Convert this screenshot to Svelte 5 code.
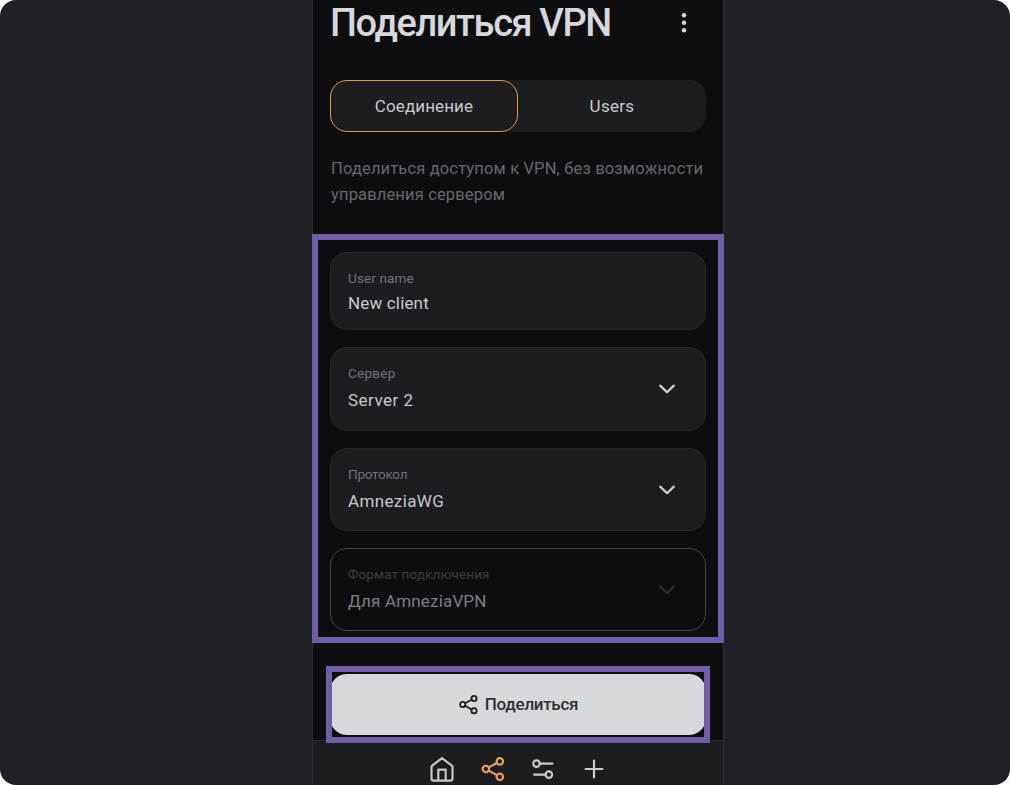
<script>
  const fields = [
    { label: 'User name', value: 'New client', kind: 'input', ls: 0.13, vs: 0.16 },
    { label: 'Сервер', value: 'Server 2', kind: 'select', ls: 0.25, vs: 0.48 },
    { label: 'Протокол', value: 'AmneziaWG', kind: 'select', ls: -0.25, vs: 0.36 },
    { label: 'Формат подключения', value: 'Для AmneziaVPN', kind: 'disabled', ls: 0.11, vs: 0.17 },
  ];
</script>

{#snippet share()}
  <circle cx="18.3" cy="5" r="3" />
  <circle cx="5.4" cy="12" r="3" />
  <circle cx="18.3" cy="19.2" r="3" />
  <path d="M8 13.5 15.6 17.7M15.6 6.5 8 10.5" />
{/snippet}

<div class="canvas">
  <main class="panel">
    <header>
      <h1>Поделиться VPN</h1>
      <svg class="dots" viewBox="0 0 6 20" width="6" height="20">
        <circle cx="3" cy="2.2" r="2.2" /><circle cx="3" cy="9.8" r="2.2" /><circle cx="3" cy="17.3" r="2.2" />
      </svg>
    </header>

    <div class="tabs">
      <div class="tab active"><span class="t1">Соединение</span></div>
      <div class="tab"><span class="t2">Users</span></div>
    </div>

    <p class="intro"><span>Поделиться доступом к VPN, без возможности</span><span>управления сервером</span></p>

    <section class="fields">
      {#each fields as f}
        <div class="field {f.kind}">
          <div class="copy">
            <span class="label" style="letter-spacing: {f.ls}px">{f.label}</span>
            <span class="value" style="letter-spacing: {f.vs}px">{f.value}</span>
          </div>
          {#if f.kind !== 'input'}
            <svg class="chev" viewBox="0 0 18 12" width="18" height="12"><path d="M2.2 2.6 9 9.2l6.8-6.6" /></svg>
          {/if}
        </div>
      {/each}
    </section>

    <div class="action">
      <button>
        <svg class="line" viewBox="0 0 24 24" width="21" height="21">{@render share()}</svg>
        <span class="bt">Поделиться</span>
      </button>
    </div>

    <nav>
      <svg class="line" viewBox="0 0 24 24" width="26" height="26">
        <path d="M2.3 9.4 12 1.9l9.7 7.5V20.7a2 2 0 0 1-2 2H4.3a2 2 0 0 1-2-2z" /><path d="M8.6 22.7V12.6h6.8v10.1" />
      </svg>
      <svg class="line orange" viewBox="0 0 24 24" width="26" height="26">{@render share()}</svg>
      <svg class="line" viewBox="0 0 24 24" width="26" height="26">
        <circle cx="6" cy="7" r="3" /><path d="M9 7h11.7M3.8 17.2h10.600" /><circle cx="17.4" cy="17.2" r="3" />
      </svg>
      <svg class="line" viewBox="0 0 24 24" width="26" height="26"><path d="M12 4.2v15.6M4.2 12h15.6" /></svg>
    </nav>
  </main>
</div>

<style>
  :global(body) { background: #fff; }
  * { box-sizing: border-box; }
  .canvas {
    width: 1010px; height: 785px; overflow: hidden; border-radius: 16px;
    background: #202126; display: flex; padding-left: 312px;
    font-family: Roboto, "Liberation Sans", sans-serif; color: #c8c9cc;
  }
  .panel {
    width: 412px; height: 785px; background: #0e0e11;
    border: solid #2e2e31; border-width: 0 1px;
    display: flex; flex-direction: column;
  }
  span, h1 { white-space: nowrap; }
  header { height: 80px; flex: none; padding: 0 36px 0 17px; display: flex; justify-content: space-between; align-items: flex-start; }
  h1 { margin: 0; font: 500 38px/47px Roboto, sans-serif; letter-spacing: -1.4px; color: #d7d8db; }
  .dots { fill: #d7d8db; margin-top: 13px; }
  .tabs { display: flex; height: 52px; flex: none; margin: 0 17px; width: 376px; background: #1c1d21; border-radius: 17px; }
  .tab { flex: 1; border-radius: 17px; display: flex; align-items: center; justify-content: center; font-size: 17px; border: 1px solid transparent; }
  .active { border-color: #e0994f; }
  .t1 { letter-spacing: 0.1px; }
  .t2 { letter-spacing: 0.3px; }
  .intro { margin: 24px 0 0 18px; height: 78px; flex: none; font-size: 16.5px; line-height: 26px; color: #66686d; display: flex; flex-direction: column; align-items: flex-start; letter-spacing: 0.15px; }
  .fields {
    width: 412px; height: 409px; flex: none; margin-left: -1px; border: 6px solid #6f5da6; background: #0e0e11;
    padding: 12px 12px 0; display: flex; flex-direction: column; gap: 17px;
  }
  .field { height: 83.4px; flex: none; border: 1px solid #27282b; border-radius: 17px; background: #1c1d21; padding: 15px 29px 0 17px; display: flex; justify-content: space-between; }
  .input { height: 78.2px; }
  .disabled { height: 83px; background: transparent; border-color: #454649; }
  .copy { display: flex; flex-direction: column; align-items: flex-start; }
  .label { font-size: 13.5px; line-height: 20px; color: #707278; }
  .value { font-size: 17px; line-height: 24px; margin-top: 5px; }
  .input .value { margin-top: 3px; }
  .disabled .label { color: #3d3e42; }
  .disabled .value { color: #7d7f84; }
  .chev { margin-top: 20px; fill: none; stroke: #cfd0d3; stroke-width: 2.2; stroke-linecap: round; stroke-linejoin: round; }
  .disabled .chev { stroke: #2e2f32; }
  .action { width: 384px; height: 77px; flex: none; margin: 23px 0 -3px 13px; border: 6px solid #6f5da6; padding-top: 2px; background: #0e0e11; position: relative; z-index: 1; overflow: hidden; }
  button { width: 376px; margin-left: -2px; height: 61px; padding: 0 0 1px; border: 0; border-radius: 17px; background: #d7d8db; color: #1c1d21; font: 500 17px Roboto, sans-serif; display: flex; align-items: center; justify-content: center; gap: 6px; }
  .bt { letter-spacing: -0.3px; color: #2e2f33; }
  .line { fill: none; stroke: currentColor; stroke-width: 2; stroke-linecap: round; stroke-linejoin: round; }
  .orange { color: #e9a05a; }
  nav { flex: 1; background: #1c1d21; border-top: 1px solid #2e2e31; display: flex; justify-content: center; gap: 24.9px; padding: 15px 0 0; }
  nav svg { flex: none; }
</style>
